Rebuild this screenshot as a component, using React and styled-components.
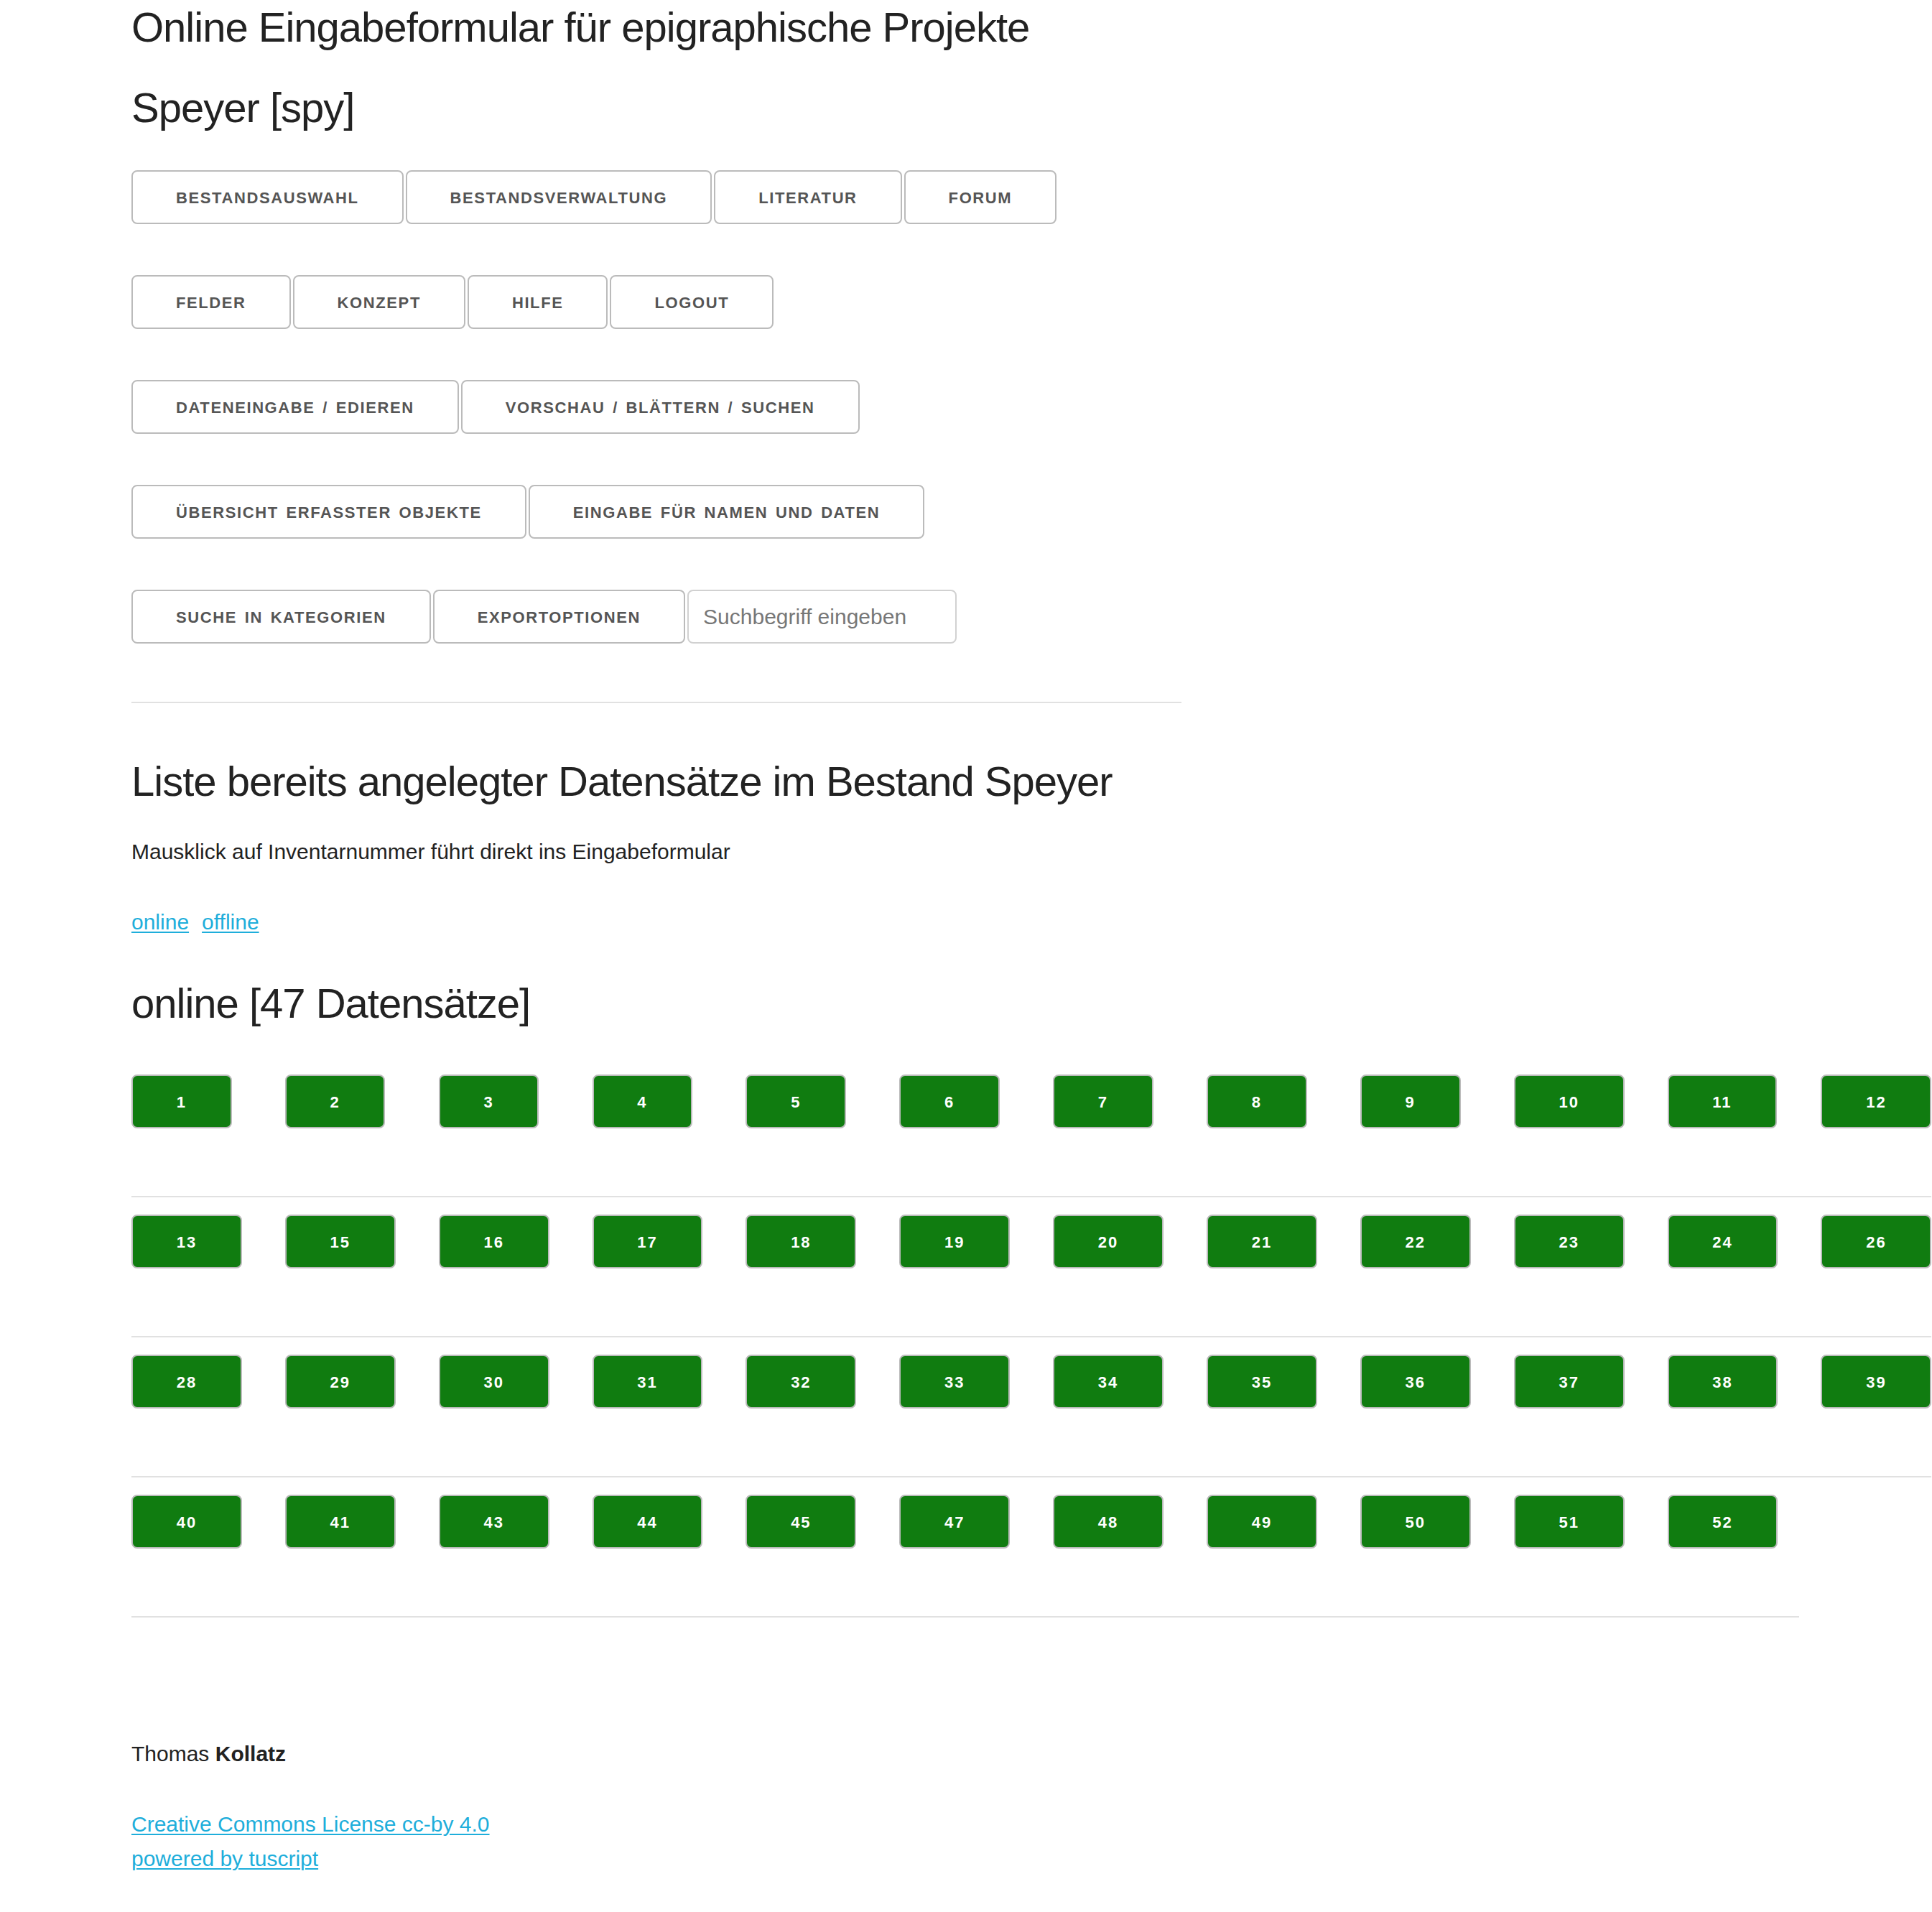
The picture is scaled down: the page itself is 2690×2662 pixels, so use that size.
import styled, { createGlobalStyle } from 'styled-components';

const GlobalStyle = createGlobalStyle`
    html, body {
        margin: 0;
        padding: 0;
        background: #fff;
        overflow-x: hidden;
    }
    body {
        font-family: 'Liberation Sans', Arial, sans-serif;
        font-size: 30px;
        line-height: 48px;
        color: #222;
    }
`;

const NAV_ROWS = [
    ['Bestandsauswahl', 'Bestandsverwaltung', 'Literatur', 'Forum'],
    ['Felder', 'Konzept', 'Hilfe', 'Logout'],
    ['Dateneingabe / Edieren', 'Vorschau / Blättern / Suchen'],
    ['Übersicht erfasster Objekte', 'Eingabe für Namen und Daten'],
    ['Suche in Kategorien', 'Exportoptionen']
];

const RECORDS = [
    [1, 2, 3, 4, 5, 6, 7, 8, 9, 10, 11, 12],
    [13, 15, 16, 17, 18, 19, 20, 21, 22, 23, 24, 26],
    [28, 29, 30, 31, 32, 33, 34, 35, 36, 37, 38, 39],
    [40, 41, 43, 44, 45, 47, 48, 49, 50, 51, 52]
];

function App() {
    return (
        <>
            <GlobalStyle />
            <Page>
                <Title>Online Eingabeformular für epigraphische Projekte</Title>
                <Title gap="49px">Speyer [spy]</Title>

                {NAV_ROWS.map((row, i) => (
                    <NavRow key={i} last={i === NAV_ROWS.length - 1}>
                        {row.map((label) => (
                            <NavButton key={label} href="#">
                                {label}
                            </NavButton>
                        ))}
                        {i === NAV_ROWS.length - 1 && (
                            <SearchInput placeholder="Suchbegriff eingeben" />
                        )}
                    </NavRow>
                ))}

                <Rule />

                <Title gap="36px">
                    Liste bereits angelegter Datensätze im Bestand Speyer
                </Title>
                <Text gap="50px">
                    Mausklick auf Inventarnummer führt direkt ins Eingabeformular
                </Text>
                <Text gap="51px">
                    <Link href="#" spaced>
                        online
                    </Link>
                    <Link href="#">offline</Link>
                </Text>

                <Title gap="37px">online [47 Datensätze]</Title>

                <RecordTable>
                    <tbody>
                        {RECORDS.map((row, i) => (
                            <tr key={i}>
                                {row.map((n) => (
                                    <RecordCell key={n}>
                                        <RecordButton href="#">{n}</RecordButton>
                                    </RecordCell>
                                ))}
                            </tr>
                        ))}
                    </tbody>
                </RecordTable>

                <Footer>
                    <Text gap="50px">
                        Thomas <strong>Kollatz</strong>
                    </Text>
                    <Text>
                        <Link href="#">Creative Commons License cc-by 4.0</Link>
                        <br />
                        <Link href="#">powered by tuscript</Link>
                    </Text>
                </Footer>
            </Page>
        </>
    );
}

export default App;

const Page = styled.div`
    padding: 0 0 40px 183px;
    min-height: 2662px;
    box-sizing: border-box;
`;

const Title = styled.h3`
    margin: 0 0 ${({ gap }) => gap || '36px'};
    font-size: 58px;
    line-height: 76px;
    font-weight: 400;
    letter-spacing: -1px;
    color: #222;
    white-space: nowrap;
`;

const NavRow = styled.div`
    display: flex;
    gap: 3px;
    margin-bottom: ${({ last }) => (last ? '0' : '71px')};
`;

const NavButton = styled.a`
    display: inline-block;
    box-sizing: border-box;
    height: 75px;
    padding: 0 60px;
    border: 2px solid #bbb;
    border-radius: 8px;
    color: #555;
    font-size: 22px;
    font-weight: 700;
    line-height: 73px;
    letter-spacing: 1.6px;
    word-spacing: 3px;
    text-transform: uppercase;
    text-decoration: none;
    white-space: nowrap;
`;

const SearchInput = styled.input`
    box-sizing: border-box;
    width: 375px;
    height: 75px;
    padding: 12px 20px;
    border: 2px solid #d1d1d1;
    border-radius: 8px;
    background: #fff;
    font-family: 'Liberation Sans', Arial, sans-serif;
    font-size: 30px;
    color: #222;
    outline: none;

    &::placeholder {
        color: #777;
    }
`;

const Rule = styled.hr`
    width: 1462px;
    margin: 81px 0 71px;
    border: 0;
    border-top: 2px solid #e1e1e1;
`;

const Text = styled.p`
    margin: 0 0 ${({ gap }) => gap || '0'};
    font-size: 30px;
    line-height: 48px;
    white-space: nowrap;
`;

const Link = styled.a`
    color: #1eaedb;
    text-decoration: underline;
    text-decoration-thickness: 2px;
    text-underline-offset: 3px;
    margin-right: ${({ spaced }) => (spaced ? '18px' : '0')};
`;

const RecordTable = styled.table`
    border-collapse: collapse;
    border-spacing: 0;
`;

const RecordCell = styled.td`
    padding: 24px 30px 94px;
    border-bottom: 2px solid #e1e1e1;
    vertical-align: top;

    &:first-child {
        padding-left: 0;
    }

    &:last-child {
        padding-right: 0;
    }
`;

const RecordButton = styled.a`
    display: block;
    width: max-content;
    box-sizing: border-box;
    height: 75px;
    padding: 0 60.7px;
    border: 2px solid #bbb;
    border-radius: 8px;
    background: #107c10;
    color: #fff;
    font-size: 22px;
    font-weight: 700;
    line-height: 73px;
    letter-spacing: 2px;
    text-decoration: none;
    text-align: center;
`;

const Footer = styled.div`
    margin-top: 166px;
`;
